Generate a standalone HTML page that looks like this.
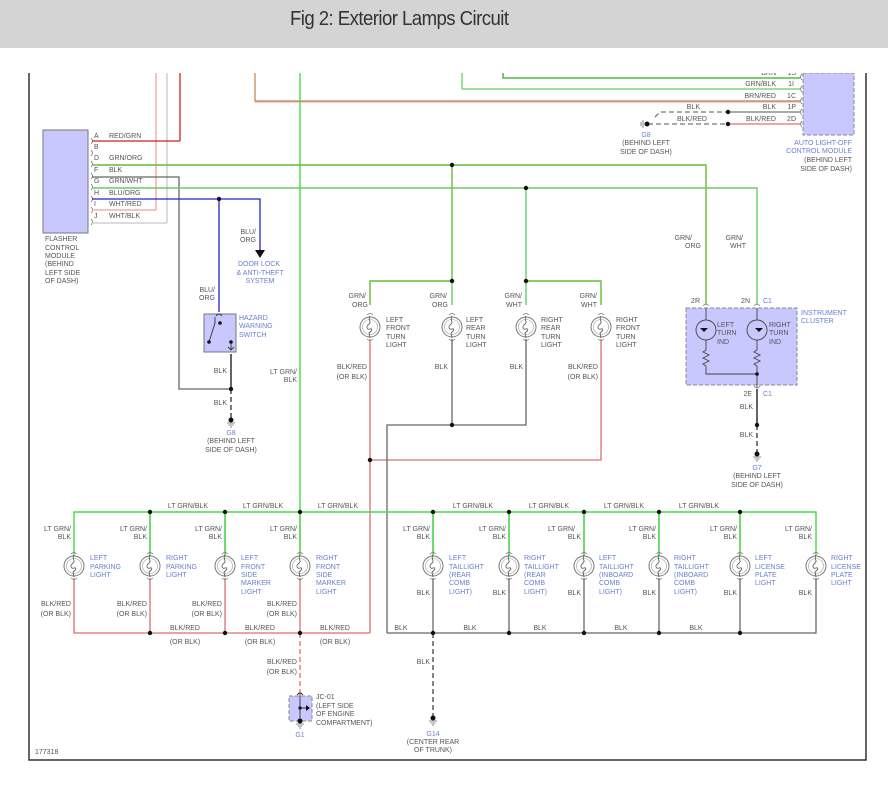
<!DOCTYPE html>
<html><head><meta charset="utf-8"><style>
html,body{margin:0;padding:0;background:#fff;width:888px;height:786px;overflow:hidden}
#hd{position:absolute;left:0;top:0;width:888px;height:48px;background:#d4d4d4}
#hd div{position:absolute;left:290px;top:8px;font:20px "Liberation Sans",sans-serif;color:#333;letter-spacing:-0.6px;transform:scaleX(0.93);transform-origin:left}
svg{position:absolute;left:0;top:0}
text{font-family:"Liberation Sans",sans-serif;font-size:7px;fill:#555}
.b{fill:#6a7fd0}
.r{text-anchor:end}
.m{text-anchor:middle}
</style></head><body>
<div id="hd"><div>Fig 2: Exterior Lamps Circuit</div></div>
<svg width="888" height="786" viewBox="0 0 888 786">
<defs>
<g id="lamp">
<circle cx="0" cy="0" r="10" fill="#fff" stroke="#777" stroke-width="1"/>
<circle cx="0" cy="0" r="7.5" fill="none" stroke="#999" stroke-width="0.6"/>
<path d="M0,-11 C-3,-7 3,-5 -2,-2 C-4,0 -3,3 0,2 C3,1 2,4 -1,6 L0,11" fill="none" stroke="#555" stroke-width="0.8"/>
<path d="M-3,-12 Q0,-15 3,-12 M-3,12 Q0,15 3,12" fill="none" stroke="#777" stroke-width="0.7"/>
</g>
<g id="gnd"><circle cx="0" cy="0" r="2.5" fill="#111"/><path d="M-4,3 H4 M-2.5,5 H2.5 M-1,7 H1" stroke="#666" stroke-width="0.8"/></g>
<clipPath id="cl"><rect x="0" y="73" width="888" height="713"/></clipPath>
</defs>
<g clip-path="url(#cl)">
<path d="M29,73 V760 H866 V73" fill="none" stroke="#333" stroke-width="1.5"/>

<line x1="156" y1="73" x2="156" y2="210" stroke="#f0a0a0" stroke-width="1.3"/>
<line x1="167" y1="73" x2="167" y2="223" stroke="#c8c8c8" stroke-width="1.3"/>
<line x1="180" y1="73" x2="180" y2="141" stroke="#cc2222" stroke-width="1.3"/>
<path d="M255,73 V101 H800" fill="none" stroke="#c08050" stroke-width="1.2"/>
<line x1="255" y1="102" x2="800" y2="102" stroke="#f0a0a0" stroke-width="1"/>
<line x1="300" y1="73" x2="300" y2="512" stroke="#33dd33" stroke-width="1.3"/>
<path d="M503,73 V78 H800" fill="none" stroke="#33aa22" stroke-width="1.3"/>
<path d="M462,73 V89 H800" fill="none" stroke="#66cc66" stroke-width="1.3"/>

<rect x="803" y="73" width="51" height="62" fill="#c8c8ff" stroke="#888" stroke-dasharray="4,2"/>
<g fill="none" stroke="#666" stroke-width="0.7">
<path d="M802,74 q-3,3 0,6 M802,86 q-3,3 0,6 M802,98 q-3,3 0,6 M802,109 q-3,3 0,6 M802,121 q-3,3 0,6"/>
</g>
<line x1="728" y1="112" x2="800" y2="112" stroke="#777" stroke-width="1.3"/>
<line x1="728" y1="124" x2="800" y2="124" stroke="#e07070" stroke-width="1.3"/>
<path d="M655,117 L660,112 H728" fill="none" stroke="#777" stroke-width="1.3" stroke-dasharray="5,3"/>
<line x1="648" y1="124" x2="728" y2="124" stroke="#777" stroke-width="1.3" stroke-dasharray="5,3"/>
<circle cx="728" cy="112" r="2.2" fill="#111"/><circle cx="728" cy="124" r="2.2" fill="#111"/>
<circle cx="647" cy="124" r="2.5" fill="#111"/><path d="M643,120 V128 M641,122 V126" stroke="#666" stroke-width="0.8"/>
<text x="776" y="75" class="r">BRN</text><text x="796" y="75" class="r">1S</text>
<text x="776" y="86" class="r">GRN/BLK</text><text x="794" y="86" class="r">1I</text>
<text x="776" y="98" class="r">BRN/RED</text><text x="796" y="98" class="r">1C</text>
<text x="776" y="109" class="r">BLK</text><text x="796" y="109" class="r">1P</text>
<text x="776" y="121" class="r">BLK/RED</text><text x="796" y="121" class="r">2D</text>
<text x="700" y="109" class="r">BLK</text><text x="707" y="121" class="r">BLK/RED</text>
<text x="646" y="137" class="b m">G8</text>
<text x="646" y="145" class="m">(BEHIND LEFT</text>
<text x="646" y="154" class="m">SIDE OF DASH)</text>
<text x="852" y="145" class="b r">AUTO LIGHT-OFF</text>
<text x="852" y="153" class="b r">CONTROL MODULE</text>
<text x="852" y="162" class="r">(BEHIND LEFT</text>
<text x="852" y="171" class="r">SIDE OF DASH)</text>

<rect x="43" y="130" width="45" height="103" fill="#c8c8ff" stroke="#777"/>
<g fill="none" stroke="#666" stroke-width="0.7"><path d="M91,138 q3,3 0,6 M91,150 q3,3 0,6 M91,161 q3,3 0,6 M91,173 q3,3 0,6 M91,184 q3,3 0,6 M91,196 q3,3 0,6 M91,207 q3,3 0,6 M91,219 q3,3 0,6"/></g>
<text x="94" y="138">A</text><text x="94" y="149">B</text><text x="94" y="160">D</text><text x="94" y="172">F</text><text x="94" y="183">G</text><text x="94" y="195">H</text><text x="94" y="206">I</text><text x="94" y="218">J</text>
<text x="109" y="138">RED/GRN</text><text x="109" y="160">GRN/ORG</text><text x="109" y="172">BLK</text><text x="109" y="183">GRN/WHT</text><text x="109" y="195">BLU/ORG</text><text x="109" y="206">WHT/RED</text><text x="109" y="218">WHT/BLK</text>
<path d="M92,141 H180" stroke="#cc2222" stroke-width="1.3"/>
<path d="M92,210 H156" stroke="#f0a0a0" stroke-width="1.3"/>
<path d="M92,223 H167" stroke="#c8c8c8" stroke-width="1.3"/>
<path d="M92,177 H179 V389 H231" fill="none" stroke="#666" stroke-width="1.3"/>
<path d="M92,165 H452 V281 M452,165 H706 V305" fill="none" stroke="#66bb33" stroke-width="1.4"/>
<path d="M92,188 H526 V281 M526,188 H757 V305" fill="none" stroke="#66cc66" stroke-width="1.4"/>
<path d="M92,199 H260 V250 M219,199 V312" fill="none" stroke="#2222cc" stroke-width="1.3"/>
<path d="M255,250 H265 L260,258 Z" fill="#111"/>
<circle cx="219" cy="199" r="2.2" fill="#111"/><circle cx="452" cy="165" r="2.2" fill="#111"/><circle cx="526" cy="188" r="2.2" fill="#111"/>
<text x="45" y="241">FLASHER</text><text x="45" y="250">CONTROL</text><text x="45" y="258">MODULE</text><text x="45" y="266">(BEHIND</text><text x="45" y="275">LEFT SIDE</text><text x="45" y="283">OF DASH)</text>
<text x="256" y="234" class="r">BLU/</text><text x="256" y="242" class="r">ORG</text>
<text x="259" y="266" class="b m">DOOR LOCK</text><text x="260" y="275" class="b m">&amp; ANTI-THEFT</text><text x="260" y="283" class="b m">SYSTEM</text>
<text x="215" y="292" class="r">BLU/</text><text x="215" y="300" class="r">ORG</text>

<rect x="204" y="314" width="32" height="38" fill="#c8c8ff" stroke="#777"/>
<path d="M215,317 V323 L209,342 M231,342 V350 M228,347 L231,350 L234,347 M216,316 q3,-4 6,0" fill="none" stroke="#333" stroke-width="0.9"/>
<circle cx="220" cy="323" r="1.8" fill="#111"/><circle cx="209" cy="342" r="1.8" fill="#111"/><circle cx="231" cy="342" r="1.8" fill="#111"/>
<text x="239" y="320" class="b">HAZARD</text><text x="239" y="328" class="b">WARNING</text><text x="239" y="337" class="b">SWITCH</text>
<line x1="231" y1="354" x2="231" y2="389" stroke="#222" stroke-width="1.4"/>
<line x1="231" y1="389" x2="231" y2="418" stroke="#333" stroke-width="1.3" stroke-dasharray="5,3"/>
<circle cx="231" cy="389" r="2.2" fill="#111"/>
<use href="#gnd" x="231" y="420"/>
<text x="227" y="373" class="r">BLK</text><text x="227" y="405" class="r">BLK</text>
<text x="231" y="435" class="b m">G8</text><text x="231" y="443" class="m">(BEHIND LEFT</text><text x="231" y="452" class="m">SIDE OF DASH)</text>
<text x="297" y="374" class="r">LT GRN/</text><text x="297" y="382" class="r">BLK</text>

<path d="M370,305 V281 H452 M526,281 H601 V305" fill="none" stroke="#66bb33" stroke-width="1.4"/>
<line x1="452" y1="281" x2="452" y2="305" stroke="#66cc66" stroke-width="1.4"/>
<line x1="526" y1="281" x2="526" y2="305" stroke="#66cc66" stroke-width="1.4"/>
<circle cx="452" cy="281" r="2.2" fill="#111"/><circle cx="526" cy="281" r="2.2" fill="#111"/>
<use href="#lamp" x="370" y="327"/><use href="#lamp" x="452" y="327"/><use href="#lamp" x="526" y="327"/><use href="#lamp" x="601" y="327"/>
<path d="M370,339 V633 M601,339 V460 H370" fill="none" stroke="#d87070" stroke-width="1.3"/>
<path d="M452,339 V425 M526,339 V425 H387 V633" fill="none" stroke="#666" stroke-width="1.3"/>
<circle cx="452" cy="425" r="2.2" fill="#111"/><circle cx="370" cy="460" r="2.2" fill="#111"/>
<g>
<text x="366" y="298" class="r">GRN/</text><text x="368" y="307" class="r">ORG</text>
<text x="447" y="298" class="r">GRN/</text><text x="448" y="307" class="r">ORG</text>
<text x="522" y="298" class="r">GRN/</text><text x="522" y="307" class="r">WHT</text>
<text x="597" y="298" class="r">GRN/</text><text x="597" y="307" class="r">WHT</text>
<text x="386" y="322">LEFT</text><text x="386" y="330">FRONT</text><text x="386" y="339">TURN</text><text x="386" y="347">LIGHT</text>
<text x="466" y="322">LEFT</text><text x="466" y="330">REAR</text><text x="466" y="339">TURN</text><text x="466" y="347">LIGHT</text>
<text x="541" y="322">RIGHT</text><text x="541" y="330">REAR</text><text x="541" y="339">TURN</text><text x="541" y="347">LIGHT</text>
<text x="616" y="322">RIGHT</text><text x="616" y="330">FRONT</text><text x="616" y="339">TURN</text><text x="616" y="347">LIGHT</text>
<text x="367" y="369" class="r">BLK/RED</text><text x="367" y="379" class="r">(OR BLK)</text>
<text x="448" y="369" class="r">BLK</text><text x="523" y="369" class="r">BLK</text>
<text x="598" y="369" class="r">BLK/RED</text><text x="598" y="379" class="r">(OR BLK)</text>
<text x="692" y="240" class="r">GRN/</text><text x="701" y="248" class="r">ORG</text>
<text x="743" y="240" class="r">GRN/</text><text x="746" y="248" class="r">WHT</text>
</g>

<rect x="686" y="308" width="111" height="77" fill="#c8c8ff" stroke="#888" stroke-dasharray="4,2"/>
<path d="M703,306 q3,-4 6,0 M754,306 q3,-4 6,0 M754,386 q3,4 6,0" fill="none" stroke="#888" stroke-width="0.8"/>
<circle cx="706" cy="330" r="10" fill="none" stroke="#444" stroke-width="0.9"/>
<circle cx="757" cy="330" r="10" fill="none" stroke="#444" stroke-width="0.9"/>
<path d="M702,328 h8 l-4,4 z M757,328 h8 l-4,4 z" fill="#111" transform="translate(-2,0)"/>
<path d="M706,308 V320 M706,340 V350 l-3,2 6,3 -6,3 6,3 -6,3 3,2 V374 H757 M757,308 V320 M757,340 V350 l-3,2 6,3 -6,3 6,3 -6,3 3,2 V388" fill="none" stroke="#444" stroke-width="0.9"/>
<circle cx="757" cy="374" r="1.8" fill="#111"/>
<text x="717" y="327">LEFT</text><text x="717" y="335">TURN</text><text x="717" y="344">IND</text>
<text x="769" y="327">RIGHT</text><text x="769" y="335">TURN</text><text x="769" y="344">IND</text>
<text x="700" y="303" class="r">2R</text><text x="750" y="303" class="r">2N</text><text x="763" y="303" class="b">C1</text>
<text x="801" y="315" class="b">INSTRUMENT</text><text x="801" y="323" class="b">CLUSTER</text>
<text x="752" y="396" class="r">2E</text><text x="763" y="396" class="b">C1</text>
<line x1="757" y1="389" x2="757" y2="425" stroke="#222" stroke-width="1.4"/>
<line x1="757" y1="425" x2="757" y2="452" stroke="#333" stroke-width="1.3" stroke-dasharray="5,3"/>
<circle cx="757" cy="425" r="2.2" fill="#111"/>
<use href="#gnd" x="757" y="454"/>
<text x="753" y="409" class="r">BLK</text><text x="753" y="437" class="r">BLK</text>
<text x="757" y="470" class="b m">G7</text><text x="757" y="478" class="m">(BEHIND LEFT</text><text x="757" y="487" class="m">SIDE OF DASH)</text>

<path d="M74,556 V512 H816 V556" fill="none" stroke="#44dd44" stroke-width="1.4"/>
<g stroke="#33cc33" stroke-width="1.4"><path d="M150,512 V556 M225,512 V556 M300,512 V556 M433,512 V556 M509,512 V556 M584,512 V556 M659,512 V556 M740,512 V556"/></g>
<path d="M74,578 V633 H370" fill="none" stroke="#d87070" stroke-width="1.3"/>
<g stroke="#d87070" stroke-width="1.3"><path d="M150,578 V633 M225,578 V633 M300,578 V633"/></g>
<path d="M387,633 H816 V578" fill="none" stroke="#666" stroke-width="1.3"/>
<g stroke="#666" stroke-width="1.3"><path d="M433,578 V633 M509,578 V633 M584,578 V633 M659,578 V633 M740,578 V633"/></g>
<line x1="300" y1="633" x2="300" y2="693" stroke="#d87070" stroke-width="1.3" stroke-dasharray="5,3"/>
<line x1="433" y1="633" x2="433" y2="716" stroke="#444" stroke-width="1.3" stroke-dasharray="5,3"/>
<g fill="#111">
<circle cx="150" cy="512" r="2.2"/><circle cx="225" cy="512" r="2.2"/><circle cx="300" cy="512" r="2.2"/><circle cx="433" cy="512" r="2.2"/><circle cx="509" cy="512" r="2.2"/><circle cx="584" cy="512" r="2.2"/><circle cx="659" cy="512" r="2.2"/><circle cx="740" cy="512" r="2.2"/>
<circle cx="150" cy="633" r="2.2"/><circle cx="225" cy="633" r="2.2"/><circle cx="300" cy="633" r="2.2"/><circle cx="433" cy="633" r="2.2"/><circle cx="509" cy="633" r="2.2"/><circle cx="584" cy="633" r="2.2"/><circle cx="659" cy="633" r="2.2"/><circle cx="740" cy="633" r="2.2"/>
</g>
<use href="#lamp" x="74" y="566"/><use href="#lamp" x="150" y="566"/><use href="#lamp" x="225" y="566"/><use href="#lamp" x="300" y="566"/>
<use href="#lamp" x="433" y="566"/><use href="#lamp" x="509" y="566"/><use href="#lamp" x="584" y="566"/><use href="#lamp" x="659" y="566"/><use href="#lamp" x="740" y="566"/><use href="#lamp" x="816" y="566"/>
<g>
<text x="188" y="508" class="m">LT GRN/BLK</text><text x="263" y="508" class="m">LT GRN/BLK</text><text x="338" y="508" class="m">LT GRN/BLK</text>
<text x="473" y="508" class="m">LT GRN/BLK</text><text x="549" y="508" class="m">LT GRN/BLK</text><text x="624" y="508" class="m">LT GRN/BLK</text><text x="699" y="508" class="m">LT GRN/BLK</text>
</g>
<g>
<text x="71" y="531" class="r">LT GRN/</text><text x="71" y="539" class="r">BLK</text>
<text x="147" y="531" class="r">LT GRN/</text><text x="147" y="539" class="r">BLK</text>
<text x="222" y="531" class="r">LT GRN/</text><text x="222" y="539" class="r">BLK</text>
<text x="297" y="531" class="r">LT GRN/</text><text x="297" y="539" class="r">BLK</text>
<text x="430" y="531" class="r">LT GRN/</text><text x="430" y="539" class="r">BLK</text>
<text x="506" y="531" class="r">LT GRN/</text><text x="506" y="539" class="r">BLK</text>
<text x="575" y="531" class="r">LT GRN/</text><text x="581" y="539" class="r">BLK</text>
<text x="656" y="531" class="r">LT GRN/</text><text x="656" y="539" class="r">BLK</text>
<text x="737" y="531" class="r">LT GRN/</text><text x="737" y="539" class="r">BLK</text>
<text x="812" y="531" class="r">LT GRN/</text><text x="812" y="539" class="r">BLK</text>
</g>
<g>
<text x="90" y="560" class="b">LEFT</text><text x="90" y="569" class="b">PARKING</text><text x="90" y="577" class="b">LIGHT</text>
<text x="166" y="560" class="b">RIGHT</text><text x="166" y="569" class="b">PARKING</text><text x="166" y="577" class="b">LIGHT</text>
<text x="241" y="560" class="b">LEFT</text><text x="241" y="569" class="b">FRONT</text><text x="241" y="577" class="b">SIDE</text><text x="241" y="585" class="b">MARKER</text><text x="241" y="594" class="b">LIGHT</text>
<text x="316" y="560" class="b">RIGHT</text><text x="316" y="569" class="b">FRONT</text><text x="316" y="577" class="b">SIDE</text><text x="316" y="585" class="b">MARKER</text><text x="316" y="594" class="b">LIGHT</text>
<text x="449" y="560" class="b">LEFT</text><text x="449" y="569" class="b">TAILLIGHT</text><text x="449" y="577" class="b">(REAR</text><text x="449" y="585" class="b">COMB</text><text x="449" y="594" class="b">LIGHT)</text>
<text x="524" y="560" class="b">RIGHT</text><text x="524" y="569" class="b">TAILLIGHT</text><text x="524" y="577" class="b">(REAR</text><text x="524" y="585" class="b">COMB</text><text x="524" y="594" class="b">LIGHT)</text>
<text x="599" y="560" class="b">LEFT</text><text x="599" y="569" class="b">TAILLIGHT</text><text x="599" y="577" class="b">(INBOARD</text><text x="599" y="585" class="b">COMB</text><text x="599" y="594" class="b">LIGHT)</text>
<text x="674" y="560" class="b">RIGHT</text><text x="674" y="569" class="b">TAILLIGHT</text><text x="674" y="577" class="b">(INBOARD</text><text x="674" y="585" class="b">COMB</text><text x="674" y="594" class="b">LIGHT)</text>
<text x="755" y="560" class="b">LEFT</text><text x="755" y="569" class="b">LICENSE</text><text x="755" y="577" class="b">PLATE</text><text x="755" y="585" class="b">LIGHT</text>
<text x="831" y="560" class="b">RIGHT</text><text x="831" y="569" class="b">LICENSE</text><text x="831" y="577" class="b">PLATE</text><text x="831" y="585" class="b">LIGHT</text>
</g>
<g>
<text x="71" y="606" class="r">BLK/RED</text><text x="71" y="616" class="r">(OR BLK)</text>
<text x="147" y="606" class="r">BLK/RED</text><text x="147" y="616" class="r">(OR BLK)</text>
<text x="222" y="606" class="r">BLK/RED</text><text x="222" y="616" class="r">(OR BLK)</text>
<text x="297" y="606" class="r">BLK/RED</text><text x="297" y="616" class="r">(OR BLK)</text>
<text x="430" y="595" class="r">BLK</text><text x="506" y="595" class="r">BLK</text><text x="581" y="595" class="r">BLK</text><text x="656" y="595" class="r">BLK</text><text x="737" y="595" class="r">BLK</text><text x="812" y="595" class="r">BLK</text>
<text x="185" y="630" class="m">BLK/RED</text><text x="185" y="644" class="m">(OR BLK)</text>
<text x="260" y="630" class="m">BLK/RED</text><text x="260" y="644" class="m">(OR BLK)</text>
<text x="335" y="630" class="m">BLK/RED</text><text x="335" y="644" class="m">(OR BLK)</text>
<text x="401" y="630" class="m">BLK</text><text x="470" y="630" class="m">BLK</text><text x="540" y="630" class="m">BLK</text><text x="621" y="630" class="m">BLK</text><text x="696" y="630" class="m">BLK</text>
<text x="297" y="664" class="r">BLK/RED</text><text x="297" y="674" class="r">(OR BLK)</text>
<text x="430" y="664" class="r">BLK</text>
</g>
<rect x="289" y="696" width="23" height="25" fill="#c8c8ff" stroke="#888" stroke-dasharray="4,2"/>
<path d="M300,693 V720 M300,708 H306 M297,695 q3,-4 6,0" fill="none" stroke="#333" stroke-width="0.9"/>
<path d="M306,705 L310,708 L306,711 Z" fill="#111"/><circle cx="300" cy="708" r="1.6" fill="#111"/>
<use href="#gnd" x="300" y="721"/>
<text x="316" y="699">JC-01</text><text x="316" y="708">(LEFT SIDE</text><text x="316" y="716">OF ENGINE</text><text x="316" y="725">COMPARTMENT)</text>
<text x="300" y="737" class="b m">G1</text>
<use href="#gnd" x="433" y="718"/>
<text x="433" y="736" class="b m">G14</text><text x="433" y="744" class="m">(CENTER REAR</text><text x="433" y="752" class="m">OF TRUNK)</text>
<text x="35" y="754">177318</text>
</g>
</svg>
</body></html>
